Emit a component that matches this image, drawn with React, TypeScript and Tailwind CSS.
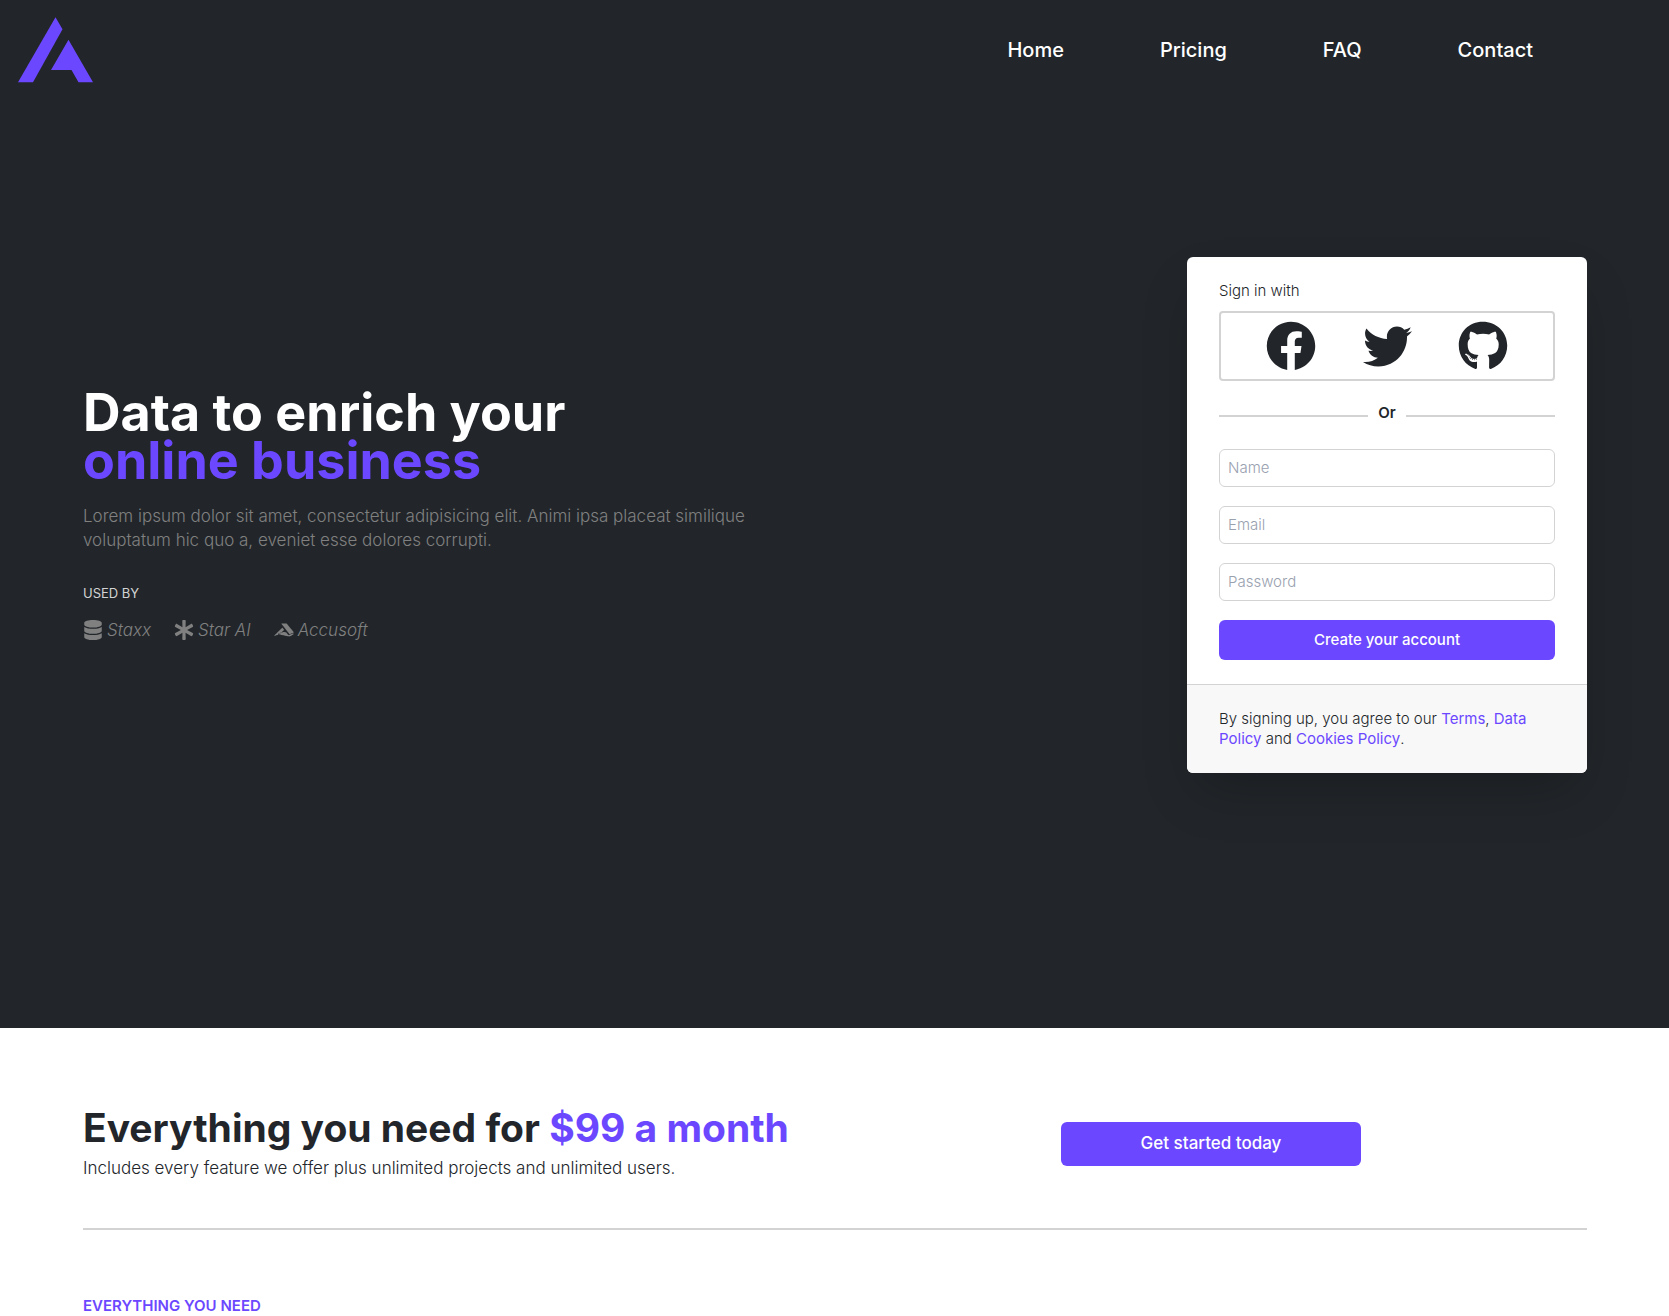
import type { ReactNode } from "react";
import { FaAccusoft, FaAsterisk, FaDatabase, FaFacebook, FaGithub, FaTwitter } from "react-icons/fa";

const navItems = ["Home", "Pricing", "FAQ", "Contact"];
const fields = [
  { label: "Name", type: "text" },
  { label: "Email", type: "email" },
  { label: "Password", type: "password" },
];
const providers = [
  { name: "Facebook", icon: <FaFacebook size={50} /> },
  { name: "Twitter", icon: <FaTwitter size={49} /> },
  { name: "GitHub", icon: <FaGithub size={50} /> },
];

function Logo() {
  return (
    <svg viewBox="0 0 75 66" className="h-[66px] w-[75px] fill-[#6b48ff]" aria-hidden="true">
      <path d="M37.5 0.3 44.5 12.3 15 65.3H0Z" />
      <path d="M50.5 22.7 75 65.3H60.5L53.5 53H33Z" />
    </svg>
  );
}

function Header() {
  return (
    <header className="flex h-[100px] items-center justify-between pl-[18px] pr-[136px]">
      <a href="#" aria-label="Home page">
        <Logo />
      </a>
      <nav>
        <ul className="flex gap-24">
          {navItems.map((item) => (
            <li key={item}>
              <a href="#" className="text-xl font-medium text-white">
                {item}
              </a>
            </li>
          ))}
        </ul>
      </nav>
    </header>
  );
}

function Brand({ icon, name }: { icon: ReactNode; name: string }) {
  return (
    <li className="flex items-center gap-1">
      {icon}
      <span className="italic">{name}</span>
    </li>
  );
}

function TermsLink({ children }: { children: ReactNode }) {
  return (
    <a href="#" className="font-normal text-[#6b48ff]">
      {children}
    </a>
  );
}

function SignUpCard() {
  return (
    <form className="w-[400px] shrink-0 overflow-hidden rounded-md bg-white text-[15px] leading-5 shadow-2xl">
      <div className="px-8 py-6">
        <p className="font-light">Sign in with</p>
        <div className="mt-2.5 flex justify-center gap-[46px] rounded border-2 border-[#d3d3d3] py-2">
          {providers.map(({ name, icon }) => (
            <button key={name} type="button" aria-label={name} className="flex size-[50px] items-center justify-center">
              {icon}
            </button>
          ))}
        </div>
        <div className="mt-[22px] flex items-center gap-2.5 font-semibold">
          <span className="mt-1.5 h-0.5 flex-1 bg-[#d3d3d3]" />
          Or
          <span className="mt-1.5 h-0.5 flex-1 bg-[#d3d3d3]" />
        </div>
        <div className="mt-[26px] flex flex-col gap-[19px]">
          {fields.map(({ label, type }) => (
            <input
              key={label}
              type={type}
              aria-label={label}
              placeholder={label}
              className="h-[38px] rounded-md border border-[#d3d3d3] px-2 pb-0.5 font-light placeholder:text-gray-400"
            />
          ))}
          <button type="submit" className="h-10 rounded-md bg-[#6b48ff] font-medium text-white">
            Create your account
          </button>
        </div>
      </div>
      <p className="border-t border-[#d3d3d3] bg-[#f8f8f8] px-8 py-6 font-light">
        By signing up, you agree to our <TermsLink>Terms</TermsLink>, <TermsLink>Data Policy</TermsLink> and{" "}
        <TermsLink>Cookies Policy</TermsLink>.
      </p>
    </form>
  );
}

function Hero() {
  return (
    <section className="flex items-center justify-between pt-[157px] pr-[82px] pb-[255px] pl-[83px]">
      <div>
        <h1 className="text-[52px] leading-12 font-bold text-white">
          Data to enrich your
          <span className="block text-[#6b48ff]">online business</span>
        </h1>
        <p className="mt-[19px] max-w-[700px] text-[17px] leading-6 font-light text-[#808080]">
          Lorem ipsum dolor sit amet, consectetur adipisicing elit. Animi ipsa placeat similique voluptatum hic quo a,
          eveniet esse dolores corrupti.
        </p>
        <p className="mt-[33px] text-[13px] leading-4 text-[#d3d3d3]">USED BY</p>
        <ul className="mt-[17px] flex gap-[23px] text-[17px] leading-6 font-light text-[#808080]">
          <Brand icon={<FaDatabase size={20} />} name="Staxx" />
          <Brand icon={<FaAsterisk size={20} />} name="Star AI" />
          <Brand icon={<FaAccusoft size={20} />} name="Accusoft" />
        </ul>
      </div>
      <SignUpCard />
    </section>
  );
}

function Pricing() {
  return (
    <section className="mr-[82px] ml-[83px] grid grid-cols-2 items-center border-b-2 border-[#d3d3d3] pt-20 pb-12">
      <div>
        <h2 className="text-[39px] leading-10 font-bold whitespace-nowrap">
          Everything you need for <span className="text-[#6b48ff]">$99 a month</span>
        </h2>
        <p className="mt-2 text-[17px] leading-6 font-light">
          Includes every feature we offer plus unlimited projects and unlimited users.
        </p>
      </div>
      <button
        type="button"
        className="h-11 w-[300px] justify-self-center rounded-md bg-[#6b48ff] text-[17px] font-medium text-white"
      >
        Get started today
      </button>
    </section>
  );
}

export default function App() {
  return (
    <div className="bg-white font-['Inter',sans-serif] text-[#22262a]">
      <div className="bg-[#22262a]">
        <Header />
        <Hero />
      </div>
      <main>
        <Pricing />
        <section className="pt-[66px] pr-[82px] pl-[83px]">
          <h3 className="text-[15px] leading-5 font-semibold text-[#6b48ff]">EVERYTHING YOU NEED</h3>
        </section>
      </main>
    </div>
  );
}
